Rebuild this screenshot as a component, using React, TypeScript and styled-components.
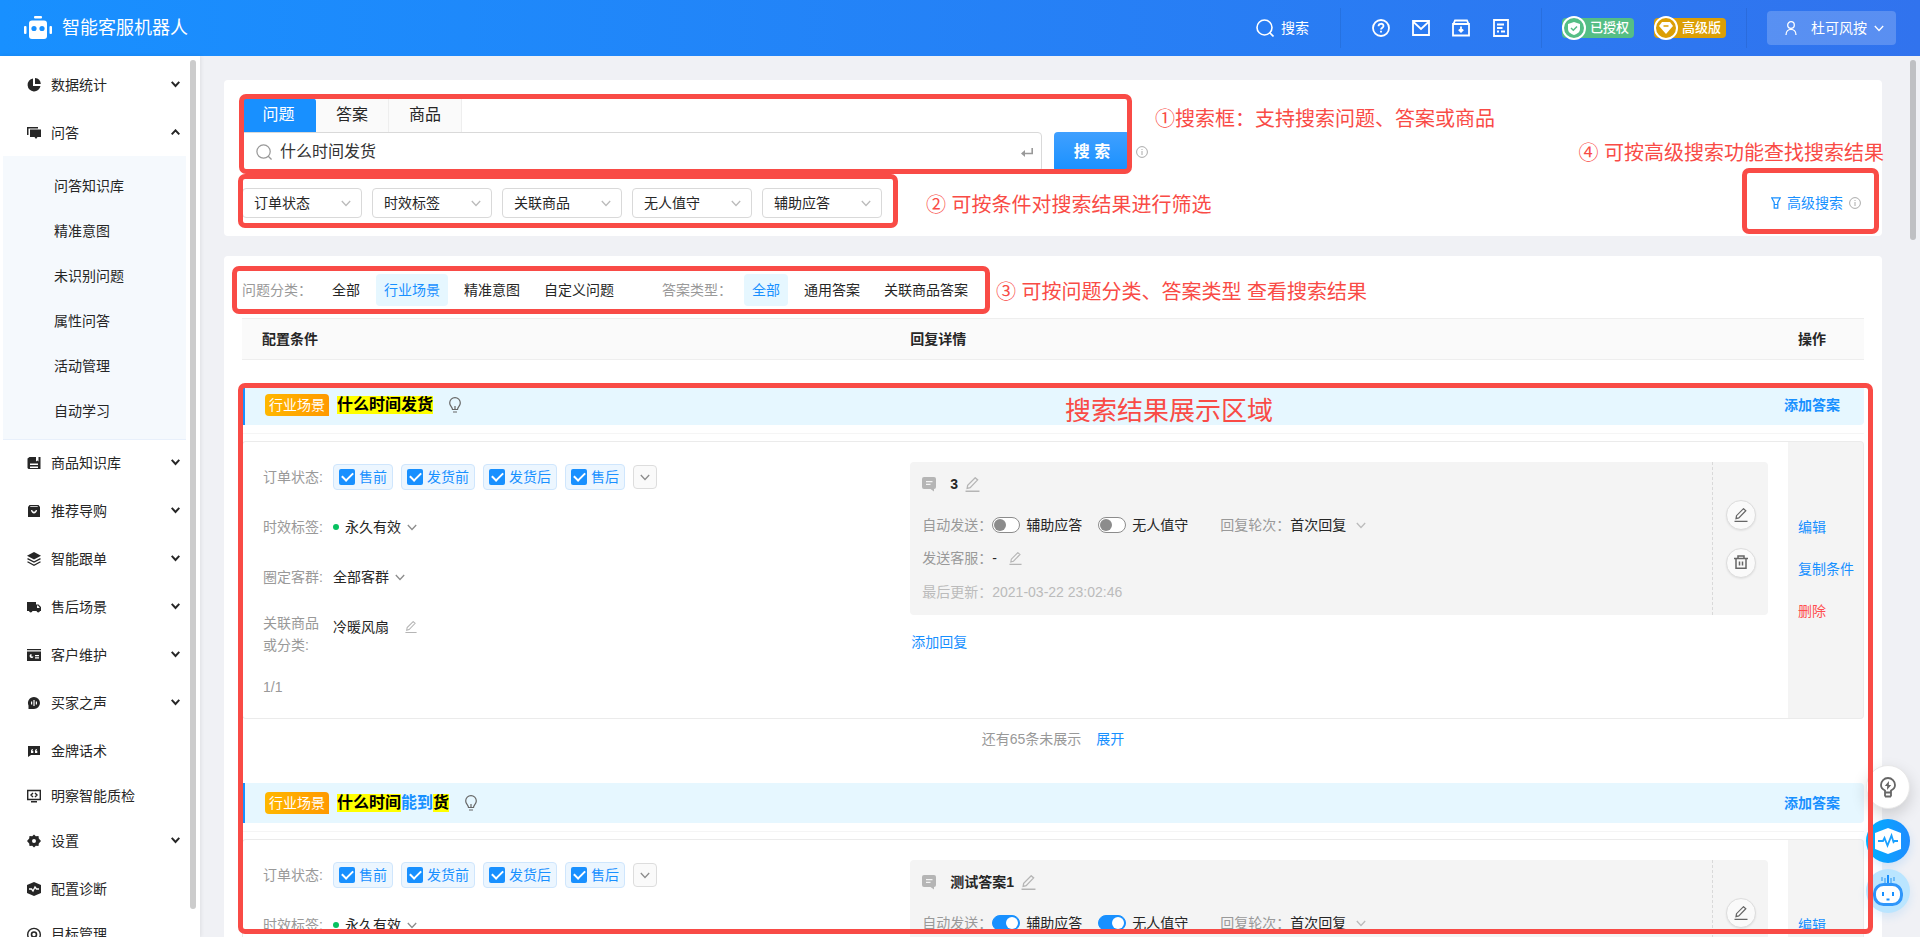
import React from "react";
import styled, { createGlobalStyle, css } from "styled-components";

const BLUE = "#1890ff";
const MARK = "#f94b46";

const GlobalStyle = createGlobalStyle`
  * { box-sizing: border-box; }
  body {
    margin: 0;
    font-family: "Liberation Sans", "Noto Sans CJK SC", sans-serif;
    font-size: 14px;
    line-height: 22px;
    color: #262626;
    background: #f0f1f5;
  }
  button, input, select { font: inherit; color: inherit; margin: 0; }
  button { background: none; border: 0; padding: 0; cursor: pointer; }
  a { text-decoration: none; color: inherit; }
  svg { display: block; flex: none; }
`;

/* ---------- shell ---------- */

const Shell = styled.div`
  position: relative;
  display: flex;
  flex-direction: column;
  height: 100vh;
  overflow: hidden;
`;

const Header = styled.header`
  display: flex;
  align-items: center;
  flex: none;
  height: 56px;
  padding: 0 24px;
  color: #fff;
  background: linear-gradient(90deg, #1890ff, #3173ee);
`;

const Brand = styled.a`
  display: flex;
  align-items: center;
  gap: 10px;
  margin-right: auto;
  font-size: 18px;
  white-space: nowrap;
`;

const HeaderSearch = styled.button`
  display: flex;
  align-items: center;
  gap: 7px;
`;

const Divider = styled.span<{ $before: number; $after: number }>`
  width: 1px;
  height: 40px;
  margin: 0 ${(p) => p.$after}px 0 ${(p) => p.$before}px;
  background: rgba(0, 0, 0, 0.08);
`;

const IconRow = styled.div`
  display: flex;
  gap: 22px;
`;

const Badges = styled.div`
  display: flex;
  gap: 20px;
`;

const Badge = styled.span<{ $color: string }>`
  display: flex;
  align-items: center;
  width: 72px;
  height: 20px;
  border-radius: 4px;
  background: ${(p) => p.$color};
  font-size: 13px;
  font-weight: 500;
  white-space: nowrap;
  gap: 4px;
`;

const BadgeRing = styled.span<{ $color: string }>`
  display: grid;
  place-items: center;
  flex: none;
  width: 24px;
  height: 24px;
  border: 2px solid #fff;
  border-radius: 50%;
  background: ${(p) => p.$color};
`;

const UserButton = styled.button`
  display: flex;
  align-items: center;
  width: 129px;
  height: 34px;
  padding: 0 12px 0 18px;
  border-radius: 4px;
  background: rgba(255, 255, 255, 0.2);
  white-space: nowrap;
`;

const UserName = styled.span`
  margin: 0 auto 0 14px;
`;

const Body = styled.div`
  display: flex;
  flex: 1;
  min-height: 0;
`;

/* ---------- sidebar ---------- */

const Sidebar = styled.nav`
  position: relative;
  flex: none;
  width: 200px;
  padding: 6px 14px 0 3px;
  background: #fff;
  box-shadow: 1px 0 4px rgba(0, 0, 0, 0.08);
  overflow: hidden;
`;

const Thumb = styled.span<{ $right: number; $height: string; $color: string }>`
  position: absolute;
  top: 4px;
  right: ${(p) => p.$right}px;
  width: 6px;
  height: ${(p) => p.$height};
  border-radius: 3px;
  background: ${(p) => p.$color};
`;

const MenuItem = styled.button<{ $group?: boolean }>`
  display: flex;
  align-items: center;
  width: 100%;
  height: 45px;
  margin-bottom: ${(p) => (p.$group ? 3 : 0)}px;
  padding: 0 6px 0 24px;
  text-align: left;
`;

const MenuLabel = styled.span`
  flex: 1;
  margin-left: 10px;
`;

const SubMenu = styled.div`
  display: flex;
  flex-direction: column;
  margin-top: 1px;
  padding: 7px 0 6px;
  background: #f5f9fd;
  border-bottom: 1px solid #e8f0fb;
`;

const SubItem = styled.a`
  height: 45px;
  padding-left: 51px;
  line-height: 46px;
`;

/* ---------- main ---------- */

const Main = styled.main`
  position: relative;
  display: flex;
  flex-direction: column;
  flex: 1;
  gap: 20px;
  min-width: 0;
  padding: 24px 38px 0 24px;
  overflow: hidden;
`;

const Card = styled.section`
  flex: none;
  padding: 18px;
  border-radius: 4px;
  background: #fff;
`;

const Tabs = styled.div`
  display: flex;
`;

const Tab = styled.button<{ $active?: boolean }>`
  width: 73px;
  height: 34px;
  border-right: 1px solid #eee;
  background: #fafafa;
  font-size: 16px;
  ${(p) =>
    p.$active &&
    css`
      width: 74px;
      border-color: ${BLUE};
      border-radius: 4px 4px 0 0;
      background: ${BLUE};
      color: #fff;
    `}
`;

const SearchForm = styled.form`
  display: flex;
  align-items: center;
`;

const SearchBox = styled.label`
  display: flex;
  align-items: center;
  flex: 0 1 800px;
  height: 40px;
  padding: 0 8px 0 13px;
  border: 1px solid #d9d9d9;
  border-radius: 0 4px 4px 4px;
  color: #999;
`;

const SearchInput = styled.input`
  flex: 1;
  min-width: 0;
  padding: 0 8px;
  border: 0;
  outline: 0;
  background: none;
  color: #333;
  font-size: 16px;
`;

const SearchButton = styled.button`
  width: 76px;
  height: 40px;
  margin: 0 6px 0 12px;
  border-radius: 4px;
  background: linear-gradient(#40a0ff, ${BLUE});
  color: #fff;
  font-size: 16px;
  font-weight: 700;
`;

const FilterRow = styled.div`
  display: flex;
  align-items: center;
  gap: 10px;
  margin-top: 16px;
`;

const SelectWrap = styled.span`
  display: grid;
  align-items: center;
  width: 120px;
  height: 30px;
  color: #bbb;

  > * { grid-area: 1 / 1; }
  > svg { justify-self: end; margin-right: 11px; pointer-events: none; }
`;

const Select = styled.select`
  appearance: none;
  width: 100%;
  height: 30px;
  padding: 0 11px;
  border: 1px solid #d9d9d9;
  border-radius: 4px;
  background: #fff;
  color: #262626;
`;

const AdvancedLink = styled.a`
  display: flex;
  align-items: center;
  gap: 6px;
  margin: 0 3px 0 auto;
  color: ${BLUE};
`;

const ChipRow = styled.div`
  display: flex;
  align-items: center;
  gap: 40px;
  margin-bottom: 12px;
`;

const ChipGroup = styled.div`
  display: flex;
  align-items: center;
  gap: 8px;
`;

const ChipTitle = styled.span`
  width: 70px;
  margin-right: 4px;
  color: #999;
  white-space: nowrap;
`;

const Chip = styled.button<{ $active?: boolean }>`
  height: 32px;
  padding: 0 8px;
  border-radius: 4px;
  white-space: nowrap;
  background: ${(p) => (p.$active ? "#e6f7ff" : "transparent")};
  color: ${(p) => (p.$active ? BLUE : "inherit")};
`;

/* ---------- results table ---------- */

const Table = styled.table`
  width: 100%;
  table-layout: fixed;
  border-spacing: 0;
`;

const Th = styled.th<{ $width?: string; $pad?: number }>`
  width: ${(p) => p.$width || "auto"};
  height: 42px;
  padding: 0 0 0 ${(p) => p.$pad || 0}px;
  border: solid #eee;
  border-width: 1px 0;
  background: #fafafa;
  text-align: left;
  font-weight: 600;
`;

const TitleCell = styled.td`
  padding: 25px 0 7px;
`;

const TitleBar = styled.div`
  display: flex;
  align-items: center;
  height: 40px;
  padding: 0 24px 0 20px;
  border-left: 3px solid ${BLUE};
  border-radius: 0 4px 4px 0;
  background: #e6f7ff;
`;

const TitleRule = styled.div`
  margin-top: 8px;
  height: 1px;
  background: #f5f5f5;
`;

const Tag = styled.span`
  height: 22px;
  padding: 0 4px;
  border-radius: 4px 4px 0 4px;
  background: linear-gradient(90deg, #ffb700, #ff9900);
  color: #fff;
`;

const Question = styled.h2`
  display: flex;
  margin: 0 16px 0 8px;
  font-size: 16px;
  line-height: 18px;
  font-weight: 600;
  color: ${BLUE};

  mark { background: #ff0; color: #000; }
`;

const AddAnswer = styled.a`
  margin-left: auto;
  color: ${BLUE};
  font-weight: 600;
`;

const ConditionCell = styled.td`
  height: 278px;
  padding: 22px 0 0 20px;
  border: solid #ebebeb;
  border-width: 1px 0 1px 1px;
  border-radius: 4px 0 0 4px;
  vertical-align: top;
`;

const Conditions = styled.div`
  display: flex;
  flex-direction: column;
  gap: 24px;
`;

const Condition = styled.div<{ $tall?: boolean }>`
  display: flex;
  align-items: center;
  gap: 8px;
  min-height: 26px;
  ${(p) =>
    p.$tall &&
    css`
      align-items: flex-start;
      margin: -2px 0 -4px;
    `}
`;

const ConditionLabel = styled.span`
  width: 62px;
  color: #999;
`;

const ConditionValue = styled.span`
  display: flex;
  align-items: center;
  height: 30px;
`;

const PageCount = styled.span`
  color: #999;
`;

const CheckChip = styled.label`
  display: flex;
  align-items: center;
  gap: 4px;
  height: 26px;
  padding: 0 5px;
  border: 1px solid #cfe6fd;
  border-radius: 4px;
  background: #ecf6ff;
  color: ${BLUE};
  white-space: nowrap;
`;

const Checkbox = styled.input`
  appearance: none;
  display: grid;
  place-items: center;
  width: 16px;
  height: 16px;
  border-radius: 2px;
  background: ${BLUE};

  &::after {
    content: "";
    width: 9px;
    height: 5px;
    margin-bottom: 3px;
    border: solid #fff;
    border-width: 0 0 2px 2px;
    transform: rotate(-45deg);
  }
`;

const ExpandButton = styled.button`
  display: grid;
  place-items: center;
  width: 24px;
  height: 24px;
  border: 1px solid #ddd;
  border-radius: 4px;
  background: #fafafa;
  color: #8c8c8c;
`;

const Dropdown = styled.button`
  display: flex;
  align-items: center;
  gap: 6px;

  svg { color: #8c8c8c; }
`;

const Dot = styled.i`
  width: 6px;
  height: 6px;
  border-radius: 50%;
  background: #07c160;
`;

const IconButton = styled.button<{ $space?: number }>`
  margin-left: ${(p) => p.$space || 0}px;
  color: #b5b5b5;
`;

const ReplyCell = styled.td`
  padding: 20px 20px 0 0;
  border: solid #ebebeb;
  border-width: 1px 0;
  vertical-align: top;
`;

const Reply = styled.div`
  display: flex;
  border-radius: 4px;
  background: #f4f4f4;
`;

const ReplyInfo = styled.div`
  flex: 1;
  min-width: 0;
  padding: 11px 12px 12px;
`;

const ReplyLine = styled.div<{ $gap: number; $muted?: boolean }>`
  display: flex;
  align-items: center;
  height: 22px;
  margin-top: ${(p) => p.$gap}px;
  white-space: nowrap;
  color: ${(p) => (p.$muted ? "#bbb" : "inherit")};
`;

const ReplyName = styled.strong`
  margin: 0 7px 0 14px;
  font-weight: 600;
`;

const ReplyLabel = styled.span<{ $muted?: boolean }>`
  width: 70px;
  color: ${(p) => (p.$muted ? "#bbb" : "#999")};
`;

const SwitchLabel = styled.label`
  display: flex;
  align-items: center;
  gap: 6px;
  margin-right: 16px;
`;

const Switch = styled.input`
  appearance: none;
  display: flex;
  align-items: center;
  width: 28px;
  height: 16px;
  padding: 0 1px;
  border: 1px solid #8c8c8c;
  border-radius: 8px;
  background: #fff;

  &::after {
    content: "";
    width: 12px;
    height: 12px;
    border-radius: 50%;
    background: #8c8c8c;
  }

  &:checked {
    justify-content: flex-end;
    border-color: ${BLUE};
    background: ${BLUE};
  }

  &:checked::after { background: #fff; }
`;

const RoundLabel = styled.label`
  display: flex;
  align-items: center;
  margin-left: 16px;
`;

const RoundSelect = styled(SelectWrap)`
  width: 76px;
  height: 22px;
  > svg { margin-right: 0; }
`;

const PlainSelect = styled.select`
  appearance: none;
  width: 100%;
  height: 22px;
  padding: 0;
  border: 0;
  background: none;
  color: #262626;
`;

const ReplyTools = styled.div`
  display: flex;
  flex-direction: column;
  align-items: center;
  justify-content: center;
  gap: 18px;
  width: 56px;
  border-left: 1px dashed #d9d9d9;
`;

const CircleButton = styled.button`
  display: grid;
  place-items: center;
  width: 30px;
  height: 30px;
  border: 1px solid #ddd;
  border-radius: 50%;
  background: #fafafa;
  color: #666;
  box-shadow: 0 1px 2px rgba(0, 0, 0, 0.08);
`;

const AddReply = styled.a`
  display: inline-block;
  margin: 16px 0 0 1px;
  color: ${BLUE};
`;

const ActionCell = styled.td`
  padding: 0 0 22px 10px;
  border: solid #ebebeb;
  border-width: 1px 1px 1px 0;
  border-radius: 0 4px 4px 0;
  background: #f4f4f4;
`;

const Actions = styled.div`
  display: flex;
  flex-direction: column;
  gap: 20px;
  white-space: nowrap;
`;

const Action = styled.a<{ $danger?: boolean }>`
  color: ${(p) => (p.$danger ? "#ff4d4f" : BLUE)};
`;

const MoreCell = styled.td`
  height: 39px;
  padding: 0;
  text-align: center;
  color: #999;

  a { margin-left: 15px; color: ${BLUE}; }
`;

/* ---------- floating buttons and annotations ---------- */

const Floats = styled.div`
  position: absolute;
  right: 10px;
  bottom: 24px;
  display: flex;
  flex-direction: column;
  align-items: center;
  gap: 6px;
`;

const FloatButton = styled.button<{ $kind: "tip" | "pulse" | "robot" }>`
  display: grid;
  place-items: center;
  width: 44px;
  height: 44px;
  border-radius: 50%;
  ${(p) =>
    p.$kind === "tip" &&
    css`
      margin-bottom: 4px;
      border: 1px solid #e8e8e8;
      background: #fff;
      color: #666;
      box-shadow: 0 6px 16px rgba(0, 0, 0, 0.16);
    `}
  ${(p) =>
    p.$kind === "pulse" &&
    css`
      background: linear-gradient(90deg, #00b0ff, #1e8cff);
      box-shadow: 0 4px 10px rgba(24, 144, 255, 0.16);
    `}
  ${(p) =>
    p.$kind === "robot" &&
    css`
      background: #bae5ff;
      box-shadow: 0 4px 10px rgba(24, 144, 255, 0.12);
    `}
`;

const Annotations = styled.div`
  position: absolute;
  inset: 0;
  pointer-events: none;
`;

type Place = {
  $top: number;
  $left?: number;
  $right?: number;
  $bottom?: number;
  $width?: number;
  $height?: number;
};

const px = (name: string, v?: number) => (v === undefined ? "" : `${name}: ${v}px;`);

const MarkBox = styled.div<Place>`
  position: absolute;
  ${(p) => px("top", p.$top)}
  ${(p) => px("left", p.$left)}
  ${(p) => px("right", p.$right)}
  ${(p) => px("bottom", p.$bottom)}
  ${(p) => px("width", p.$width)}
  ${(p) => px("height", p.$height)}
  border: 5px solid ${MARK};
  border-radius: 7px;
`;

const MarkText = styled.p<Place & { $size?: number }>`
  position: absolute;
  ${(p) => px("top", p.$top)}
  ${(p) => px("left", p.$left)}
  ${(p) => px("right", p.$right)}
  margin: 0;
  color: ${MARK};
  font-size: ${(p) => p.$size || 20}px;
  line-height: 30px;
  white-space: nowrap;
`;

/* ---------- icons ---------- */

type ChevronProps = { width?: number; up?: boolean; stroke?: number };

const Chevron = ({ width = 10, up, stroke = 1.3 }: ChevronProps) => (
  <svg width={width} height={width * 0.7} viewBox="0 0 10 7" fill="none" stroke="currentColor" strokeWidth={stroke}>
    <path d={up ? "M.8 6 5 1.500 9.200 6" : "M.8 1 5 5.500 9.200 1"} />
  </svg>
);

const Magnifier = ({ size, stroke }: { size: number; stroke: number }) => (
  <svg width={size} height={size} viewBox="0 0 18 18" fill="none" stroke="currentColor" strokeWidth={stroke}>
    <circle cx="8.500" cy="8.500" r="7.500" />
    <path d="m13.500 13.500 4 4" />
  </svg>
);

const Info = () => (
  <svg width="12" height="12" viewBox="0 0 12 12" fill="none" stroke="#aaa">
    <circle cx="6" cy="6" r="5.400" />
    <path d="M6 5v4M6 3v1" />
  </svg>
);

const Pen = ({ size = 12 }: { size?: number }) => (
  <svg width={size} height={size} viewBox="0 0 14 14" fill="none" stroke="currentColor" strokeWidth="1.200">
    <path d="M.500 13.300h13M2 10.700l.500-3L9.500.700l2.300 2-7 7.200z" />
  </svg>
);

const Bulb = () => (
  <svg width="12" height="16" viewBox="0 0 12 16" fill="none" stroke="#666" strokeWidth="1.200">
    <path d="M3.500 12.500C3.500 10 .700 9 .700 5.900a5.300 5.300 0 0 1 10.600 0c0 3.100-2.800 4.100-2.800 6.600zM4 15h4M6 9v3.500" />
  </svg>
);

const Message = () => (
  <svg width="14" height="15" viewBox="0 0 14 15">
    <path fill="#b5b5b5" d="M2 0h10a2 2 0 0 1 2 2v8a2 2 0 0 1-2 2v2.500L8.500 12H2a2 2 0 0 1-2-2V2a2 2 0 0 1 2-2z" />
    <path stroke="#f4f4f4" strokeWidth="1.300" d="M4 4.600h6.500M4 7.400h4.500" />
  </svg>
);

const Trash = () => (
  <svg width="14" height="15" viewBox="0 0 14 15" fill="none" stroke="currentColor" strokeWidth="1.500">
    <path d="M0 3.500h14M4 3V1h6v2M2 4v9.300h10V4M5.500 6.500v4M8.500 6.500v4" />
  </svg>
);

const Enter = () => (
  <svg width="12" height="9" viewBox="0 0 12 9" fill="none" stroke="#999" strokeWidth="1.600">
    <path d="M11.200 0v5.500H2" />
    <path d="M4 2 0 5.500 4 9z" fill="#999" stroke="none" />
  </svg>
);

const Funnel = () => (
  <svg width="10" height="12" viewBox="0 0 10 12" fill="none" stroke="currentColor" strokeWidth="1.200">
    <path d="M.700.800h8.600L6.800 5.500v5.700H3.200V5.500zM3.200 7.500h3.600" />
  </svg>
);

const RobotLogo = () => (
  <svg width="28" height="24" viewBox="0 0 28 24" fill="#fff">
    <rect x="10" width="8" height="2.500" rx="1" />
    <rect x="5" y="4.500" width="18" height="18.500" rx="3" />
    <rect y="10" width="2.500" height="8" rx="1" />
    <rect x="25.500" y="10" width="2.500" height="8" rx="1" />
    <circle cx="10" cy="12.500" r="2.600" fill={BLUE} />
    <circle cx="18" cy="12.500" r="2.600" fill={BLUE} />
  </svg>
);

const HeaderIcon = ({ children }: { children: React.ReactNode }) => (
  <svg width="18" height="18" viewBox="0 0 18 18" fill="none" stroke="#fff" strokeWidth="1.800">
    {children}
  </svg>
);

const menuIcons: Record<string, React.ReactNode> = {
  stats: (
    <path d="M6 .500V8h7.500A6.500 6.500 0 1 1 6 .500zM8 0a6.500 6.500 0 0 1 5.800 6H8z" />
  ),
  qa: <path d="M0 1h11v1.500H1.500V9H0zM3 3.500h11V11h-3.500L9 13l-1.500-2H3z" />,
  goods: (
    <path fillRule="evenodd" d="M2.500 1H9v4.500l1.300-1 1.200 1V1h2v12H1.500L.500 12V2.500zM3 7.500V9h8V7.500zm0 3V12h8v-1.500z" />
  ),
  guide: (
    <path fillRule="evenodd" d="M2.500 1h9L13 3v10H1V3zM3 3h8l-.500-.800h-7zM4 6c.300 4.500 5.700 4.500 6 0H8.700C8.500 8.300 5.500 8.300 5.300 6z" />
  ),
  layers: (
    <>
      <path d="M7 0 14 3.700 7 7.400 0 3.700z" />
      <path fill="none" stroke="currentColor" strokeWidth="1.300" d="m.500 6.600 6.500 3.500 6.500-3.500M.500 9.700 7 13.200l6.500-3.500" />
    </>
  ),
  truck: (
    <path fillRule="evenodd" d="M0 2h9v2.500h2.500L14 7v4h-1a1.800 1.800 0 0 1-3.500 0h-4A1.800 1.800 0 0 1 2 11H0zm10 3.500V8h2.800L11 5.500z" />
  ),
  card: (
    <path fillRule="evenodd" d="M0 1h14v1.200H0zM0 3.500h14V13H0zM4.500 6a2 2 0 1 0 2 2.500h-2zM8 7v1.200h4V7zm0 2.300v1.200h4V9.300z" />
  ),
  voice: (
    <path fillRule="evenodd" d="M7 1a6 6 0 1 1 0 12H1.500v-3.500A6 6 0 0 1 7 1zM4 5.500v3h1.200v-3zM6.400 4v6h1.200V4zM8.800 5.500v3H10v-3z" />
  ),
  quote: (
    <path fillRule="evenodd" d="M1 2h12v9H4l-3 2zm3 4.500V9h2.300V6.700H5.200L6 5H5zm4 0V9h2.300V6.700H9.200L10 5H9z" />
  ),
  monitor: (
    <path fill="none" stroke="currentColor" strokeWidth="1.400" d="M.700 1.500h12.600v9H.700zM4 12.800h6M6 4 4 6l2 2M8 4l2 2-2 2" />
  ),
  gear: (
    <path fillRule="evenodd" d="m7 .500 1.800 1.700 2.700-.200.300 2.600L14 7l-2.200 2.400-.300 2.600-2.700-.200L7 13.500l-1.800-1.700-2.700.200-.300-2.600L0 7l2.200-2.400L2.500 2l2.700.200zM7 5a2 2 0 1 0 0 4 2 2 0 0 0 0-4z" />
  ),
  pulse: (
    <>
      <path d="m7 0 7 3v8l-7 3-7-3V3z" />
      <path fill="none" stroke="#fff" strokeWidth="1.300" d="M2 7h2.500l1.500 2 2-4 1.500 2H12" />
    </>
  ),
  target: (
    <>
      <path fill="none" stroke="currentColor" strokeWidth="1.400" d="M3 12.500a6.300 6.300 0 1 1 8 0" />
      <circle cx="7" cy="7.500" r="2.500" fill="none" stroke="currentColor" strokeWidth="1.600" />
    </>
  ),
};

/* ---------- data ---------- */

const subItems = ["问答知识库", "精准意图", "未识别问题", "属性问答", "活动管理", "自动学习"];

const menu = [
  { icon: "stats", label: "数据统计", group: true },
  { icon: "qa", label: "问答", children: subItems },
  { icon: "goods", label: "商品知识库", group: true },
  { icon: "guide", label: "推荐导购", group: true },
  { icon: "layers", label: "智能跟单", group: true },
  { icon: "truck", label: "售后场景", group: true },
  { icon: "card", label: "客户维护", group: true },
  { icon: "voice", label: "买家之声", group: true },
  { icon: "quote", label: "金牌话术" },
  { icon: "monitor", label: "明察智能质检" },
  { icon: "gear", label: "设置", group: true },
  { icon: "pulse", label: "配置诊断" },
  { icon: "target", label: "目标管理" },
];

const filters = ["订单状态", "时效标签", "关联商品", "无人值守", "辅助应答"];

const results = [
  { title: [["什么时间发货", true]] as [string, boolean][], reply: "3", on: false },
  {
    title: [["什么时间", true], ["能到", false], ["货", true]] as [string, boolean][],
    reply: "测试答案1",
    on: true,
  },
];

/* ---------- parts ---------- */

const Result = ({ title, reply, on }: (typeof results)[number]) => (
  <tbody>
    <tr>
      <TitleCell colSpan={3}>
        <TitleBar>
          <Tag>行业场景</Tag>
          <Question>
            {title.map(([text, hit]) => (hit ? <mark key={text}>{text}</mark> : <span key={text}>{text}</span>))}
          </Question>
          <Bulb />
          <AddAnswer href="#add-answer">添加答案</AddAnswer>
        </TitleBar>
        <TitleRule />
      </TitleCell>
    </tr>
    <tr>
      <ConditionCell>
        <Conditions>
          <Condition>
            <ConditionLabel>订单状态:</ConditionLabel>
            {["售前", "发货前", "发货后", "售后"].map((s) => (
              <CheckChip key={s}>
                <Checkbox type="checkbox" defaultChecked />
                {s}
              </CheckChip>
            ))}
            <ExpandButton aria-label="展开订单状态">
              <Chevron />
            </ExpandButton>
          </Condition>
          <Condition>
            <ConditionLabel>时效标签:</ConditionLabel>
            <Dropdown>
              <Dot />
              永久有效
              <Chevron />
            </Dropdown>
          </Condition>
          <Condition>
            <ConditionLabel>圈定客群:</ConditionLabel>
            <Dropdown>
              全部客群
              <Chevron />
            </Dropdown>
          </Condition>
          <Condition $tall>
            <ConditionLabel>
              关联商品
              <br />
              或分类:
            </ConditionLabel>
            <ConditionValue>
              冷暖风扇
              <IconButton $space={16} aria-label="编辑关联商品">
                <Pen />
              </IconButton>
            </ConditionValue>
          </Condition>
          <PageCount>1/1</PageCount>
        </Conditions>
      </ConditionCell>
      <ReplyCell>
        <Reply>
          <ReplyInfo>
            <ReplyLine $gap={0}>
              <Message />
              <ReplyName>{reply}</ReplyName>
              <IconButton aria-label="编辑答案名称">
                <Pen size={15} />
              </IconButton>
            </ReplyLine>
            <ReplyLine $gap={19}>
              <ReplyLabel>自动发送：</ReplyLabel>
              <SwitchLabel>
                <Switch type="checkbox" role="switch" defaultChecked={on} />
                辅助应答
              </SwitchLabel>
              <SwitchLabel>
                <Switch type="checkbox" role="switch" defaultChecked={on} />
                无人值守
              </SwitchLabel>
              <RoundLabel>
                <ReplyLabel>回复轮次：</ReplyLabel>
                <RoundSelect>
                  <PlainSelect>
                    <option>首次回复</option>
                  </PlainSelect>
                  <Chevron />
                </RoundSelect>
              </RoundLabel>
            </ReplyLine>
            <ReplyLine $gap={11}>
              <ReplyLabel>发送客服：</ReplyLabel>-
              <IconButton $space={12} aria-label="编辑发送客服">
                <Pen size={13} />
              </IconButton>
            </ReplyLine>
            <ReplyLine $gap={12} $muted>
              <ReplyLabel $muted>最后更新：</ReplyLabel>
              2021-03-22 23:02:46
            </ReplyLine>
          </ReplyInfo>
          <ReplyTools>
            <CircleButton aria-label="编辑回复">
              <Pen size={14} />
            </CircleButton>
            <CircleButton aria-label="删除回复">
              <Trash />
            </CircleButton>
          </ReplyTools>
        </Reply>
        <AddReply href="#add-reply">添加回复</AddReply>
      </ReplyCell>
      <ActionCell>
        <Actions>
          <Action href="#edit">编辑</Action>
          <Action href="#copy">复制条件</Action>
          <Action href="#delete" $danger>
            删除
          </Action>
        </Actions>
      </ActionCell>
    </tr>
    <tr>
      <MoreCell colSpan={3}>
        还有65条未展示<a href="#more">展开</a>
      </MoreCell>
    </tr>
  </tbody>
);

export default function App() {
  return (
    <Shell>
      <GlobalStyle />
      <Header>
        <Brand href="#home">
          <RobotLogo />
          智能客服机器人
        </Brand>
        <HeaderSearch>
          <Magnifier size={18} stroke={1.6} />
          搜索
        </HeaderSearch>
        <Divider $before={31} $after={31} />
        <IconRow>
          <HeaderIcon>
            <circle cx="9" cy="9" r="8" />
            <path d="M6.500 7.200C6.500 4 11.500 4 11.500 7c0 1.700-2.500 1.700-2.500 3.600M9 11.800v1.800" />
          </HeaderIcon>
          <HeaderIcon>
            <path d="M1 2h16v14H1zM1.500 3 9 10l7.500-7" />
          </HeaderIcon>
          <HeaderIcon>
            <path d="M1 5h16v11.500H1zM1.500 5 3 1.500h12L16.500 5M9 7.500v5M6.800 10.500 9 12.700l2.200-2.200" />
          </HeaderIcon>
          <HeaderIcon>
            <path d="M2 1h14v16H2zM5 5.500h7M5 9h5.500M5 12.500h2M9 12.500h4" />
          </HeaderIcon>
        </IconRow>
        <Divider $before={31} $after={20} />
        <Badges>
          <Badge $color="#55be85">
            <BadgeRing $color="#55be85">
              <svg width="12" height="13" viewBox="0 0 12 13">
                <path fill="#fff" d="m6 0 6 2v5c0 3-2.500 4.800-6 6-3.500-1.200-6-3-6-6V2z" />
                <path fill="none" stroke="#55be85" strokeWidth="1.500" d="m3 6 2.300 2.300L9 4.500" />
              </svg>
            </BadgeRing>
            已授权
          </Badge>
          <Badge $color="#dc9f05">
            <BadgeRing $color="#dc9f05">
              <svg width="14" height="12" viewBox="0 0 14 12">
                <path fill="#fff" d="M3 0h8l3 4-7 8-7-8z" />
                <path stroke="#dc9f05" strokeWidth="1.500" d="M4.500 4h5" />
              </svg>
            </BadgeRing>
            高级版
          </Badge>
        </Badges>
        <Divider $before={20} $after={20} />
        <UserButton>
          <svg width="12" height="14" viewBox="0 0 12 14" fill="none" stroke="#fff" strokeWidth="1.300">
            <circle cx="6" cy="4" r="3.300" />
            <path d="M1 14c0-7.500 10-7.500 10 0" />
          </svg>
          <UserName>杜可风按</UserName>
          <Chevron />
        </UserButton>
      </Header>

      <Body>
        <Sidebar>
          {menu.map((m) => (
            <React.Fragment key={m.label}>
              <MenuItem $group={m.group}>
                <svg width="14" height="14" viewBox="0 0 14 14" fill="currentColor">
                  {menuIcons[m.icon]}
                </svg>
                <MenuLabel>{m.label}</MenuLabel>
                {(m.group || m.children) && <Chevron width={9} stroke={2.2} up={!!m.children} />}
              </MenuItem>
              {m.children && (
                <SubMenu>
                  {m.children.map((c) => (
                    <SubItem href="#menu" key={c}>
                      {c}
                    </SubItem>
                  ))}
                </SubMenu>
              )}
            </React.Fragment>
          ))}
          <Thumb $right={4} $height="calc(100% - 32px)" $color="#ccc" />
        </Sidebar>

        <Main>
          <Card>
            <Tabs>
              <Tab $active>问题</Tab>
              <Tab>答案</Tab>
              <Tab>商品</Tab>
            </Tabs>
            <SearchForm>
              <SearchBox>
                <Magnifier size={16} stroke={1.4} />
                <SearchInput aria-label="搜索问题" defaultValue="什么时间发货" />
                <Enter />
              </SearchBox>
              <SearchButton type="button">搜 索</SearchButton>
              <Info />
            </SearchForm>
            <FilterRow>
              {filters.map((f) => (
                <SelectWrap key={f}>
                  <Select aria-label={f}>
                    <option>{f}</option>
                  </Select>
                  <Chevron />
                </SelectWrap>
              ))}
              <AdvancedLink href="#advanced">
                <Funnel />
                高级搜索
                <Info />
              </AdvancedLink>
            </FilterRow>
          </Card>

          <Card>
            <ChipRow>
              <ChipGroup>
                <ChipTitle>问题分类：</ChipTitle>
                <Chip>全部</Chip>
                <Chip $active>行业场景</Chip>
                <Chip>精准意图</Chip>
                <Chip>自定义问题</Chip>
              </ChipGroup>
              <ChipGroup>
                <ChipTitle>答案类型：</ChipTitle>
                <Chip $active>全部</Chip>
                <Chip>通用答案</Chip>
                <Chip>关联商品答案</Chip>
              </ChipGroup>
            </ChipRow>
            <Table>
              <thead>
                <tr>
                  <Th $width="41.2%" $pad={20}>
                    配置条件
                  </Th>
                  <Th>回复详情</Th>
                  <Th $width="76px" $pad={10}>
                    操作
                  </Th>
                </tr>
              </thead>
              {results.map((r) => (
                <Result key={r.reply} {...r} />
              ))}
            </Table>
          </Card>
          <Thumb $right={4} $height="180px" $color="#bfc0c3" />
        </Main>
      </Body>

      <Floats>
        <FloatButton $kind="tip" aria-label="提示">
          <svg width="16" height="21" viewBox="0 0 16 21" fill="none" stroke="currentColor" strokeWidth="1.800">
            <path d="M5 15.500v-2C2.500 12.300 1 10.300 1 8a7 7 0 0 1 14 0c0 2.300-1.500 4.300-4 5.500v2zM5 19.500h6M5 15.500v4M11 15.500v4" />
            <path fill="currentColor" stroke="none" d="M9 4 4.800 9h2.400L7 13l4.200-5H8.800z" />
          </svg>
        </FloatButton>
        <FloatButton $kind="pulse" aria-label="诊断">
          <svg width="28" height="28" viewBox="0 0 28 28">
            <path fill="#fff" d="M14 1 27 6v16l-13 5L1 22V6z" />
            <path fill="none" stroke="#1aa0ff" strokeWidth="1.800" d="M4 14h5l1.500-3 3 7.500 4-10 2 6.500 1-1H24" />
          </svg>
        </FloatButton>
        <FloatButton $kind="robot" aria-label="机器人">
          <svg width="30" height="32" viewBox="0 0 30 32">
            <path stroke="#4aa8f5" strokeWidth="1.300" d="M9 2v4M12 3v5M18 3v5M21 2v4" />
            <path stroke={BLUE} strokeWidth="2" d="M15 0v9" />
            <rect x="1.500" y="9.500" width="27" height="20" rx="9" fill="#fff" stroke="#2f96fa" strokeWidth="3" />
            <path stroke={BLUE} strokeWidth="2" d="M10 17v4M20 17v4M13.500 24.500h3" />
          </svg>
        </FloatButton>
      </Floats>

      <Annotations>
        <MarkBox $top={94} $left={239} $width={893} $height={80} />
        <MarkBox $top={174} $left={238} $width={660} $height={54} />
        <MarkBox $top={266} $left={232} $width={758} $height={48} />
        <MarkBox $top={168} $right={41} $width={137} $height={66} />
        <MarkBox $top={383} $left={238} $right={47} $bottom={3} />
        <MarkText $top={104} $left={1155}>①搜索框：支持搜索问题、答案或商品</MarkText>
        <MarkText $top={190} $left={926}>② 可按条件对搜索结果进行筛选</MarkText>
        <MarkText $top={277} $left={996}>③ 可按问题分类、答案类型 查看搜索结果</MarkText>
        <MarkText $top={138} $right={36}>④ 可按高级搜索功能查找搜索结果</MarkText>
        <MarkText $top={396} $left={1065} $size={26}>
          搜索结果展示区域
        </MarkText>
      </Annotations>
    </Shell>
  );
}
